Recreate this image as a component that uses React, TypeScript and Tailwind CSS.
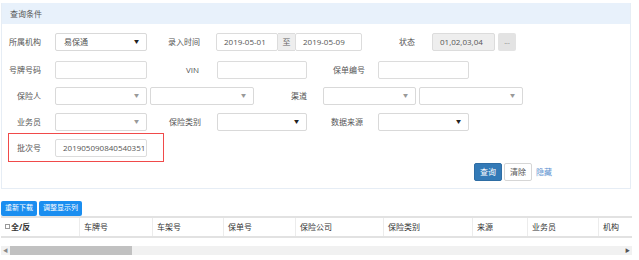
import React from "react";

const font = { fontFamily: '"Open Sans", "Noto Sans CJK SC", sans-serif' };

function Sel({ w, dark, value }: { w: string; dark?: boolean; value?: string }) {
  return (
    <div className={`${w} h-[18px] border border-[#d9d9d9] rounded-[2px] bg-white flex items-center justify-between pl-[8px] pr-[7px] text-[8px] text-[#555]`}>
      <span>{value ?? ""}</span>
      <span className={`text-[5px] ${dark ? "text-[#222]" : "text-[#999]"}`}>▼</span>
    </div>
  );
}

function Inp({ w, value, bg }: { w: string; value?: string; bg?: string }) {
  return (
    <div className={`${w} h-[18px] border border-[#dcdcdc] rounded-[2px] ${bg ?? "bg-white"} flex items-center pl-[7px] text-[8px] text-[#555]`}>
      {value ?? ""}
    </div>
  );
}

function Lbl({ w, text, cls }: { w: string; text: string; cls: string }) {
  return <div className={`${w} ${cls} text-[8px] text-[#555] leading-none shrink-0`}>{text}</div>;
}

export default function App() {
  const cols = [
    { w: "w-[78px]", t: "全/反", first: true },
    { w: "w-[73px]", t: "车牌号" },
    { w: "w-[71px]", t: "车架号" },
    { w: "w-[72px]", t: "保单号" },
    { w: "w-[88px]", t: "保险公司" },
    { w: "w-[89px]", t: "保险类别" },
    { w: "w-[55px]", t: "来源" },
    { w: "w-[71px]", t: "业务员" },
    { w: "w-[34px]", t: "机构" },
  ];
  return (
    <div className="w-[639px] h-[260px] bg-white overflow-hidden" style={font}>
      <div className="pt-[3px] pl-[1px]">
        <div className="w-[630px] border border-[#e6edf5] border-t-0">
          <div className="h-[21px] bg-[#e8f1fb] flex items-center pl-[8px] text-[8px] text-[#555]">查询条件</div>
          <div className="pt-[9px] pb-[7px]">
            {/* row1 */}
            <div className="flex items-center h-[18px]">
              <Lbl w="w-[53px]" cls="pl-[7px]" text="所属机构" />
              <Sel w="w-[92px]" dark value="易保通" />
              <Lbl w="w-[69px]" cls="text-right pr-[16px]" text="录入时间" />
              <div className="flex w-[146px] h-[18px]">
                <Inp w="w-[62px]" value="2019-05-01" />
                <div className="w-[17px] h-[18px] bg-[#eeeeee] border-y border-[#dcdcdc] flex items-center justify-center text-[8px] text-[#666]">至</div>
                <Inp w="w-[67px]" value="2019-05-09" />
              </div>
              <Lbl w="w-[70px]" cls="text-right pr-[17px]" text="状态" />
              <Inp w="w-[63px]" value="01,02,03,04" bg="bg-[#eeeeee]" />
              <div className="ml-[3px] w-[18px] h-[18px] rounded-[2px] bg-[#e3e3e3] flex items-center justify-center text-[7px] text-[#777] leading-none pb-[2px]">...</div>
            </div>
            {/* row2 */}
            <div className="flex items-center h-[18px] mt-[10px]">
              <Lbl w="w-[53px]" cls="pl-[7px]" text="号牌号码" />
              <Inp w="w-[92px]" />
              <Lbl w="w-[70px]" cls="text-right pr-[18px]" text="VIN" />
              <Inp w="w-[90px]" />
              <Lbl w="w-[71px]" cls="text-right pr-[13px]" text="保单编号" />
              <Inp w="w-[91px]" />
            </div>
            {/* row3 */}
            <div className="flex items-center h-[18px] mt-[8px]">
              <Lbl w="w-[53px]" cls="pl-[15px]" text="保险人" />
              <Sel w="w-[92px]" />
              <div className="w-[3px]" />
              <Sel w="w-[104px]" />
              <Lbl w="w-[69px]" cls="text-right pr-[16px]" text="渠道" />
              <Sel w="w-[93px]" />
              <div className="w-[3px]" />
              <Sel w="w-[104px]" />
            </div>
            {/* row4 */}
            <div className="flex items-center h-[18px] mt-[8px]">
              <Lbl w="w-[53px]" cls="pl-[15px]" text="业务员" />
              <Sel w="w-[92px]" />
              <Lbl w="w-[70px]" cls="text-right pr-[16px]" text="保险类别" />
              <Sel w="w-[90px]" dark />
              <Lbl w="w-[71px]" cls="text-right pr-[15px]" text="数据来源" />
              <Sel w="w-[91px]" dark />
            </div>
            {/* row5 */}
            <div className="mt-[2px] ml-[6px] w-[156px] h-[29px] border border-[#f04a4a] flex items-center">
              <Lbl w="w-[46px]" cls="pl-[8px]" text="批次号" />
              <Inp w="w-[92px]" value="201905090840540351" />
            </div>
            {/* buttons */}
            <div className="flex items-center justify-end pr-[78px] mt-[1px] h-[18px]">
              <div className="w-[28px] h-[18px] rounded-[2px] bg-[#337ab7] border border-[#2e6da4] flex items-center justify-center text-[8px] text-white">查询</div>
              <div className="ml-[2px] w-[28px] h-[18px] rounded-[2px] bg-white border border-[#d6d6d6] flex items-center justify-center text-[8px] text-[#555]">清除</div>
              <div className="ml-[4px] text-[8px] text-[#5b8fcf]">隐藏</div>
            </div>
          </div>
        </div>
      </div>
      <div className="mt-[12px] pl-[1px] flex gap-[2px]">
        <div className="w-[36px] h-[15px] rounded-[2px] bg-[#1a8ef0] flex items-center justify-center text-[7px] text-white">重新下载</div>
        <div className="w-[43px] h-[15px] rounded-[2px] bg-[#1a8ef0] flex items-center justify-center text-[7px] text-white">调整显示列</div>
      </div>
      <div className="ml-[1px] w-[631px] flex border-t-2 border-b-2 border-[#e2e2e2] h-[22px]">
        {cols.map((c, i) => (
          <div key={i} className={`${c.w} h-full flex items-center ${i > 0 ? "border-l border-[#ececec] pl-[4px]" : "pl-[4px]"} text-[8px] text-[#333] shrink-0`}>
            {c.first ? (
              <>
                <span className="w-[5px] h-[5px] border border-[#999] bg-white mr-[1px] mb-[2px]" />
                <span className="font-bold">{c.t}</span>
              </>
            ) : (
              c.t
            )}
          </div>
        ))}
      </div>
      <div className="mt-[8px] ml-[1px] w-[631px] h-[9px] bg-[#f1f1f1] flex items-center">
        <span className="text-[5px] text-[#888] w-[9px] text-center">◀</span>
        <div className="w-[122px] h-[9px] bg-[#c1c1c1]" />
        <div className="flex-1" />
        <span className="text-[5px] text-[#555] w-[9px] text-center">▶</span>
      </div>
    </div>
  );
}
